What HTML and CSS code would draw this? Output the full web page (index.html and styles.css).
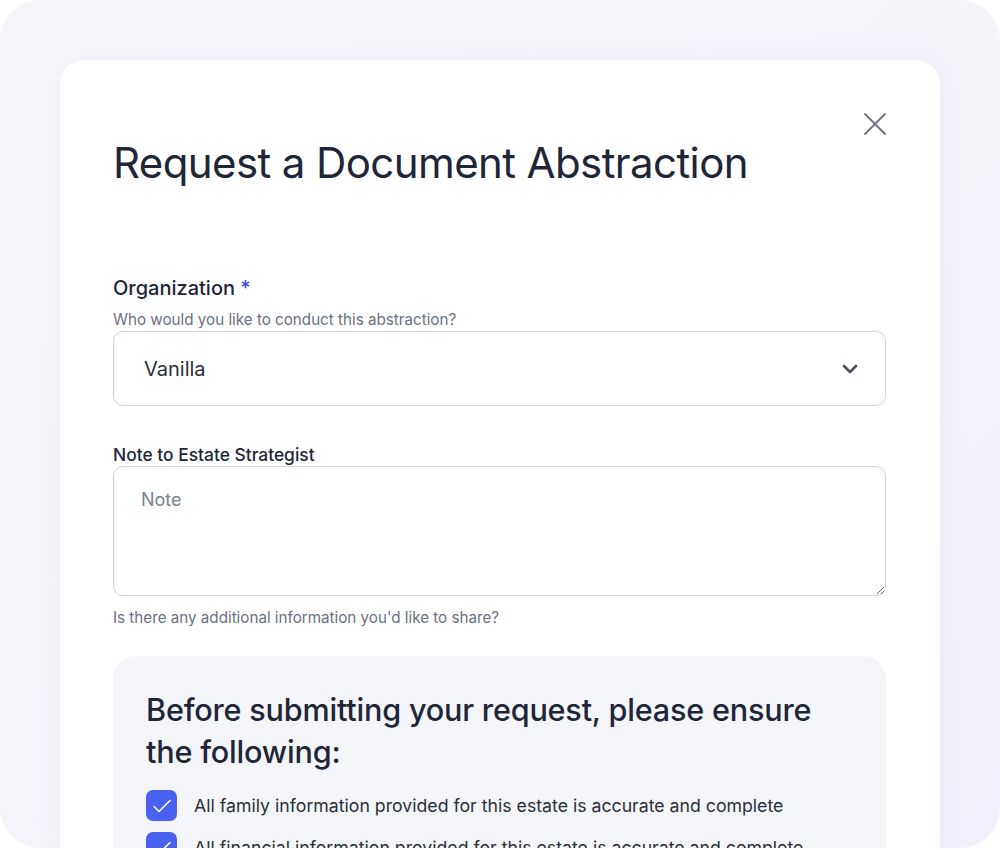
FILE: index.html
```html
<!DOCTYPE html>
<html lang="en">
<head>
    <meta charset="UTF-8">
    <meta name="viewport" content="width=device-width, initial-scale=1.0">
    <title>Request a Document Abstraction</title>
    <link rel="stylesheet" href="styles.css">
</head>
<body>

    <div class="frame">
        <div class="modal">
            <button type="button" class="close-btn" aria-label="Close">
                <svg width="24" height="24" viewBox="0 0 24 24" fill="none" stroke="currentColor" stroke-width="1.8" stroke-linecap="round">
                    <path d="M2 2 L22 22 M22 2 L2 22"/>
                </svg>
            </button>

            <h1 class="modal-title">Request a Document Abstraction</h1>

            <form id="abstraction-form" novalidate>
                <label class="field-label" for="organizacion">Organization <span class="required">*</span></label>
                <p class="field-hint">Who would you like to conduct this abstraction?</p>
                <div class="select-wrap">
                    <select id="organizacion" name="organizacion">
                        <option>Vanilla</option>
                    </select>
                    <svg class="chevron" width="16" height="10" viewBox="0 0 16 10" fill="none" stroke="currentColor" stroke-width="2.6" stroke-linecap="round" stroke-linejoin="round">
                        <path d="M2 2 L8 8 L14 2"/>
                    </svg>
                </div>

                <label class="field-label note-label" for="nota">Note to Estate Strategist</label>
                <textarea id="nota" name="nota" placeholder="Note"></textarea>
                <p class="field-hint help-text">Is there any additional information you'd like to share?</p>

                <div class="checklist">
                    <h2>Before submitting your request, please ensure the following:</h2>
                    <div class="check-row">
                        <span class="checkbox">
                            <svg width="20" height="16" viewBox="0 0 20 16" fill="none" stroke="#fff" stroke-width="1.6" stroke-linecap="round" stroke-linejoin="round">
                                <path d="M2 8.5 L7 13.5 L18 2.5"/>
                            </svg>
                        </span>
                        <span>All family information provided for this estate is accurate and complete</span>
                    </div>
                    <div class="check-row">
                        <span class="checkbox">
                            <svg width="20" height="16" viewBox="0 0 20 16" fill="none" stroke="#fff" stroke-width="1.6" stroke-linecap="round" stroke-linejoin="round">
                                <path d="M2 8.5 L7 13.5 L18 2.5"/>
                            </svg>
                        </span>
                        <span>All financial information provided for this estate is accurate and complete</span>
                    </div>
                </div>
            </form>
        </div>
    </div>

</body>
</html>
```

FILE: styles.css
```css
body {
    font-family: Inter, "Noto Sans", sans-serif;
    background-color: #ffffff;
    margin: 0;
    color: #1f2638;
}

.frame {
    height: 848px;
    padding: 60px 60px 0;
    box-sizing: border-box;
    border-radius: 40px;
    background: linear-gradient(135deg, #f6f7fb 0%, #f3f3fa 60%, #f0effb 100%);
    overflow: hidden;
}

.modal {
    position: relative;
    background-color: #ffffff;
    border-radius: 24px 24px 0 0;
    padding: 78px 54px 0 53px;
    height: 100%;
    box-sizing: border-box;
    box-shadow: 0px 0px 30px rgba(70, 70, 140, 0.05);
}

.close-btn {
    position: absolute;
    top: 52px;
    right: 53px;
    padding: 0;
    border: none;
    background: none;
    color: #6f727c;
    cursor: pointer;
}

.modal-title {
    margin: 0;
    font-size: 42px;
    line-height: 50px;
    font-weight: 400;
    letter-spacing: -0.6px;
    color: #1f2638;
}

.field-label {
    display: block;
    margin-top: 88px;
    font-size: 20px;
    line-height: 24px;
    font-weight: 500;
    color: #1f2638;
}

.required {
    color: #3d4fd6;
}

.field-hint {
    margin: 10px 0 0;
    font-size: 15.2px;
    line-height: 20px;
    color: #6b7180;
}

.select-wrap {
    position: relative;
    margin-top: 1px;
}

select, textarea {
    display: block;
    box-sizing: border-box;
    width: 100%;
    border: 1px solid #cfd3dc;
    border-radius: 10px;
    background-color: #ffffff;
    font-family: inherit;
    color: #2b2f3a;
}

select {
    height: 75px;
    padding: 0 30px;
    font-size: 20px;
    appearance: none;
    -webkit-appearance: none;
}

.chevron {
    position: absolute;
    right: 28px;
    top: 33px;
    color: #4b5060;
    pointer-events: none;
}

.note-label {
    margin-top: 38px;
    font-size: 17.4px;
    line-height: 22px;
}

textarea {
    height: 130px;
    padding: 21px 27px;
    font-size: 18px;
    line-height: 24px;
}

textarea::placeholder {
    color: #7c8190;
}

.help-text {
    margin-top: 12px;
}

.checklist {
    margin-top: 28px;
    padding: 33px 32px 0 33px;
    background-color: #f4f5f8;
    border-radius: 24px 24px 0 0;
    height: 300px;
}

.checklist h2 {
    margin: 0 0 17px;
    font-size: 30.6px;
    line-height: 42px;
    font-weight: 500;
    letter-spacing: -0.2px;
    color: #1f2638;
}

.check-row {
    display: flex;
    align-items: center;
    gap: 17px;
    margin-bottom: 11px;
    font-size: 17.7px;
    color: #2b2f3a;
}

.checkbox {
    display: flex;
    align-items: center;
    justify-content: center;
    flex-shrink: 0;
    width: 31px;
    height: 31px;
    border-radius: 7px;
    background-color: #4a60ee;
}
```
